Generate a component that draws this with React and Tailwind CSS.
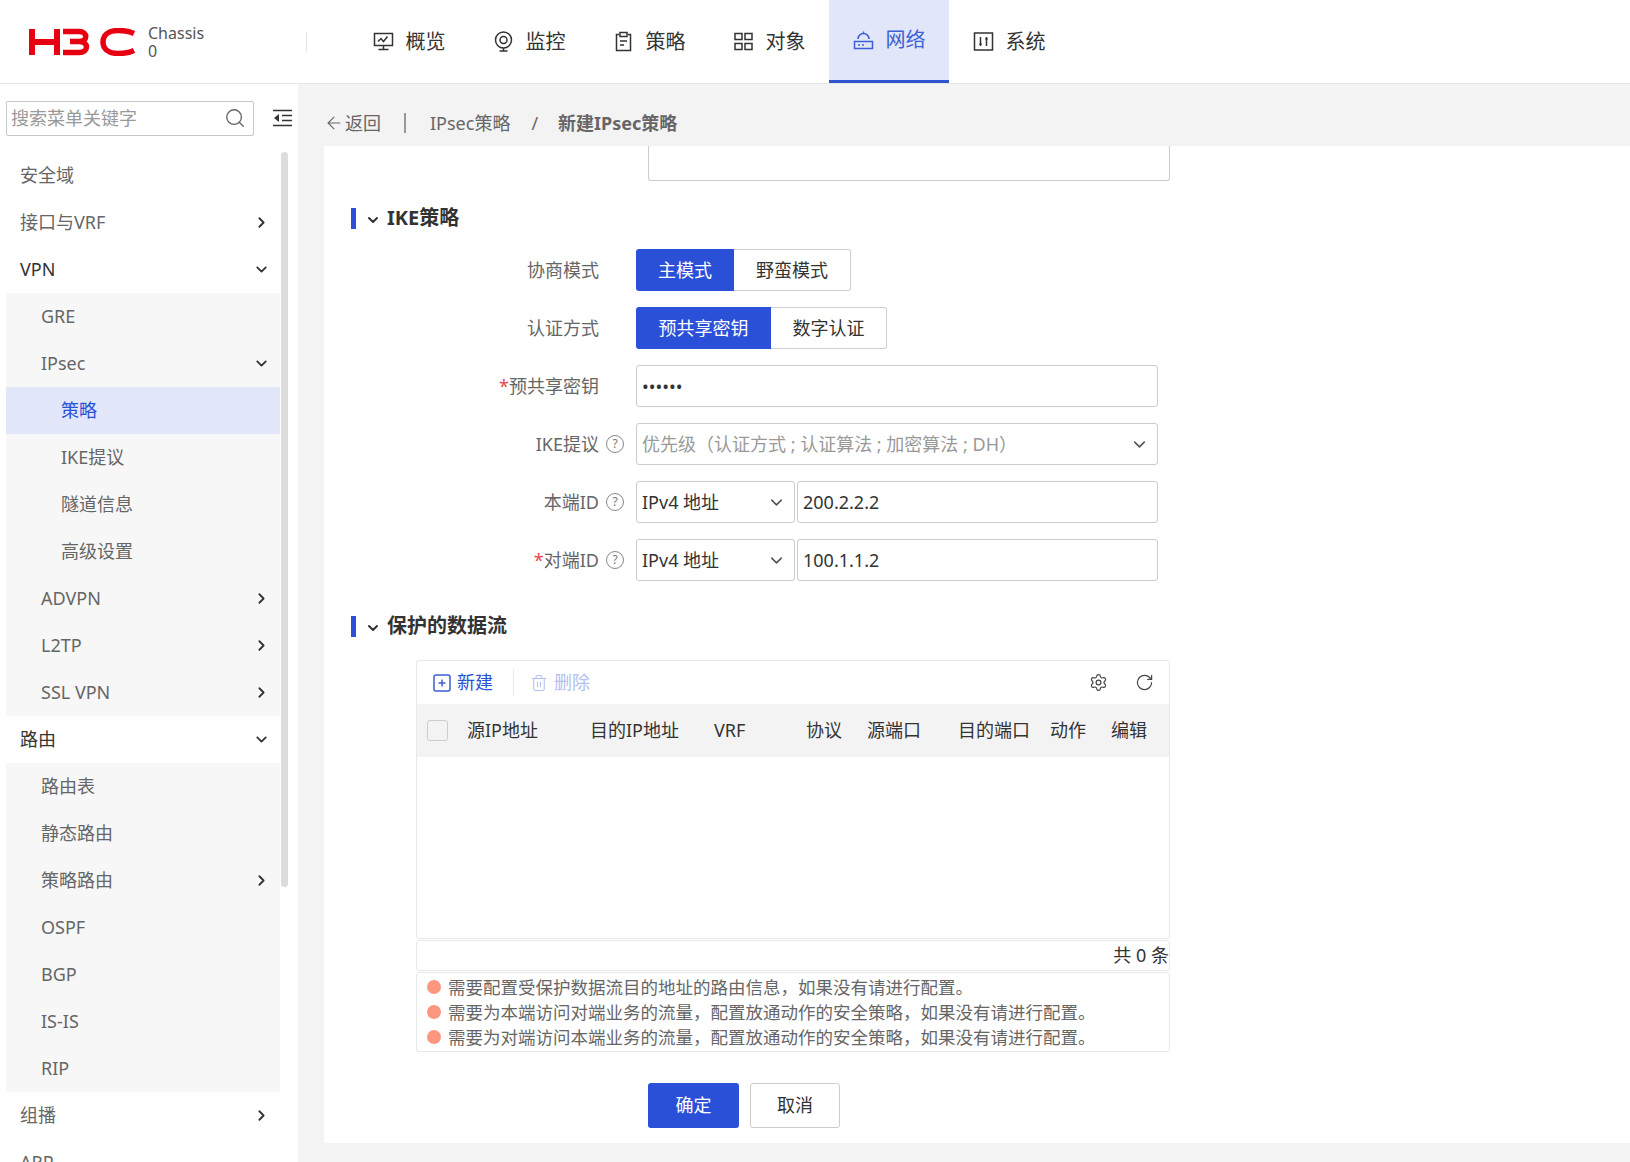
import { ArrowLeft, ChevronDown, ChevronRight, RotateCw, Search, Settings, Trash2 } from "lucide-react";

const FONT = { fontFamily: '"Noto Sans", "Noto Sans CJK SC", sans-serif' };

const menu = [
  { label: "安全域", level: 1 },
  { label: "接口与VRF", level: 1, arrow: "right" },
  { label: "VPN", level: 1, arrow: "down", dark: true },
  { label: "GRE", level: 2 },
  { label: "IPsec", level: 2, arrow: "down" },
  { label: "策略", level: 3, active: true },
  { label: "IKE提议", level: 3 },
  { label: "隧道信息", level: 3 },
  { label: "高级设置", level: 3 },
  { label: "ADVPN", level: 2, arrow: "right" },
  { label: "L2TP", level: 2, arrow: "right" },
  { label: "SSL VPN", level: 2, arrow: "right" },
  { label: "路由", level: 1, arrow: "down", dark: true },
  { label: "路由表", level: 2 },
  { label: "静态路由", level: 2 },
  { label: "策略路由", level: 2, arrow: "right" },
  { label: "OSPF", level: 2 },
  { label: "BGP", level: 2 },
  { label: "IS-IS", level: 2 },
  { label: "RIP", level: 2 },
  { label: "组播", level: 1, arrow: "right" },
  { label: "ARP", level: 1 },
];

const levelPad = { 1: "pl-[14px]", 2: "pl-[35px]", 3: "pl-[55px]" };

function H3CLogo() {
  return (
    <svg width="106" height="28" viewBox="0 0 106 28" fill="none" stroke="#e60012" strokeWidth="5.5">
      <path d="M3 1v26M28 1v26M3 14h25" strokeWidth="6" />
      <path d="M34 3.5h16c9 0 9 10 0 10h-9m9 0c10 0 10 11 0 11H34" />
      <path d="M105 5.5c-4-2-9-3-16-3-10 0-15 5-15 11.500s5 11.500 15 11.500c7 0 12-1 16-3" />
    </svg>
  );
}

function NavIcon({ name }) {
  const cls = name === "net" ? "text-[#3d5fd6]" : "text-[#333]";
  return (
    <svg width="21" height="21" viewBox="0 0 21 21" fill="none" stroke="currentColor" strokeWidth="1.5" className={cls}>
      {name === "overview" && (
        <>
          <path d="M1.500 2.500h18v12h-18z" />
          <path d="M5 10.500l3-3 2.500 3 4-5" />
          <path d="M10.500 14.500v4M5.500 18.500h10" />
        </>
      )}
      {name === "monitor" && (
        <>
          <circle cx="10.500" cy="9" r="8" />
          <circle cx="10.500" cy="9" r="3.500" />
          <path d="M6.500 20h8M10.500 17v3" />
        </>
      )}
      {name === "policy" && (
        <>
          <path d="M6 3.500H3.500v16h14v-16H15" />
          <path d="M7 1.500h7v4H7z" />
          <path d="M7 10h7M7 14h4" />
        </>
      )}
      {name === "object" && (
        <>
          <path d="M2 2.500h7v6H2zM12 2.500h7v6h-7zM2 12.500h7v6H2zM12 12.500h7v6h-7z" />
        </>
      )}
      {name === "net" && (
        <>
          <path d="M5 9a5.500 5.500 0 0 1 11 0" />
          <path d="M1.500 11.500h18v7h-18z" />
          <path d="M5 15h2M9 15h2" />
          <path d="M10.500 3.500V1.500" />
        </>
      )}
      {name === "system" && (
        <>
          <path d="M1.500 2h18v17h-18z" />
          <path d="M7.500 6v9M13.500 6v9" />
          <path d="M5.800 12.500h3.400l-1.700 2.500zM11.800 8.500h3.400l-1.700-2.500z" fill="currentColor" stroke="none" />
        </>
      )}
    </svg>
  );
}

function Help() {
  return (
    <span className="flex h-[18px] w-[18px] shrink-0 items-center justify-center rounded-full border border-[#888] text-[12px] leading-none text-[#777]">
      ?
    </span>
  );
}

function Row({ label, required, help, children }) {
  return (
    <div className="flex h-[42px] items-center">
      <div className="flex w-[312px] shrink-0 items-center justify-end gap-[7px] pr-[12px]">
        <span className="text-[18px] text-[#666]">
          {required && <span className="text-[#e5484d]">*</span>}
          {label}
        </span>
        {help ? <Help /> : <span className="w-[18px]" />}
      </div>
      {children}
    </div>
  );
}

function Toggle({ on, off, onWidth, offWidth }) {
  return (
    <div className="flex h-[42px] text-[18px]">
      <div className={`flex items-center justify-center rounded-l-[3px] bg-[#2b50d8] text-white ${onWidth}`}>{on}</div>
      <div className={`flex items-center justify-center rounded-r-[3px] border border-l-0 border-[#d0d0d0] text-[#333] ${offWidth}`}>{off}</div>
    </div>
  );
}

function SelectBox({ width, muted, children }) {
  return (
    <div className={`flex h-[42px] items-center justify-between rounded-[3px] border border-[#ccc] pl-[5px] pr-[8px] text-[18px] ${width} ${muted ? "text-[#999]" : "text-[#333]"}`}>
      <span>{children}</span>
      <ChevronDown size={19} className="text-[#555]" />
    </div>
  );
}

function TextBox({ className, children }) {
  return (
    <div className={`flex h-[42px] items-center rounded-[3px] border border-[#ccc] pl-[5px] text-[18px] text-[#333] ${className}`}>
      {children}
    </div>
  );
}

function SectionTitle({ children, className }) {
  return (
    <div className={`flex h-[22px] items-center pl-[27px] ${className}`}>
      <span className="h-[21px] w-[5px] bg-[#2b50d8]" />
      <ChevronDown size={16} strokeWidth={3} className="ml-[9px] mt-[3px] text-[#333]" />
      <span className="ml-[6px] text-[20px] font-bold text-[#333]">{children}</span>
    </div>
  );
}

const columns = [
  ["源IP地址", "w-[123px]"],
  ["目的IP地址", "w-[124px]"],
  ["VRF", "w-[92px]"],
  ["协议", "w-[61px]"],
  ["源端口", "w-[91px]"],
  ["目的端口", "w-[92px]"],
  ["动作", "w-[61px]"],
  ["编辑", "w-[50px]"],
];

const notes = [
  "需要配置受保护数据流目的地址的路由信息，如果没有请进行配置。",
  "需要为本端访问对端业务的流量，配置放通动作的安全策略，如果没有请进行配置。",
  "需要为对端访问本端业务的流量，配置放通动作的安全策略，如果没有请进行配置。",
];

function Sidebar() {
  return (
    <aside className="relative h-full w-[298px] shrink-0 overflow-hidden bg-white">
      <div className="flex h-[68px] items-center pl-[6px]">
        <div className="flex h-[35px] w-[248px] items-center justify-between rounded-[2px] border border-[#c8c8c8] pl-[4px] pr-[7px] text-[18px] text-[#999]">
          <span>搜索菜单关键字</span>
          <Search size={22} strokeWidth={1.5} className="text-[#666]" />
        </div>
        <svg width="19" height="18" viewBox="0 0 19 18" fill="none" stroke="#333" strokeWidth="1.6" className="ml-[19px]">
          <path d="M0 1.500h19M0 16.500h19M9 6.500h10M9 11.500h10" />
          <path d="M6 5v8L1 9z" fill="#333" stroke="none" />
        </svg>
      </div>
      <div className="w-[280px] pl-[6px]">
        {menu.map((item) => (
          <div
            key={item.label + item.level}
            className={`flex h-[47px] items-center justify-between pr-[10px] text-[18px] ${levelPad[item.level]} ${
              item.active
                ? "bg-[#e1e6f9] text-[#2b50d8]"
                : item.level === 1
                ? item.dark
                  ? "bg-white text-[#333]"
                  : "bg-white text-[#666]"
                : "bg-[#f7f7f7] text-[#666]"
            }`}
          >
            <span>{item.label}</span>
            {item.arrow === "right" && <ChevronRight size={17} strokeWidth={2.6} className="text-[#333]" />}
            {item.arrow === "down" && <ChevronDown size={17} strokeWidth={2.6} className="text-[#333]" />}
          </div>
        ))}
      </div>
      {/* scrollbar */}
      <div className="absolute left-[281px] top-[68px] h-[735px] w-[7px] rounded-full bg-[#dcdcdc]" />
    </aside>
  );
}

export default function App() {
  return (
    <div className="flex h-[1162px] w-[1630px] flex-col overflow-hidden bg-white" style={FONT}>
      {/* Header */}
      <header className="flex h-[84px] shrink-0 items-center border-b border-[#e4e4e4] bg-white">
        <div className="ml-[29px] flex items-center">
          <H3CLogo />
        </div>
        <div className="ml-[13px] flex flex-col text-[16px] leading-[18px] text-[#555]">
          <span>Chassis</span>
          <span>0</span>
        </div>
        <div className="ml-[102px] h-[20px] w-px bg-[#e5e5e5]" />
        <nav className="ml-[42px] flex h-full">
          {[
            ["overview", "概览"],
            ["monitor", "监控"],
            ["policy", "策略"],
            ["object", "对象"],
            ["net", "网络"],
            ["system", "系统"],
          ].map(([icon, text]) => (
            <div
              key={icon}
              className={`flex h-[83px] w-[120px] items-center justify-center gap-[12px] text-[20px] ${
                icon === "net" ? "border-b-[3px] border-[#2f54d0] bg-[#e1e6f9] text-[#3d5fd6]" : "text-[#333]"
              }`}
            >
              <NavIcon name={icon} />
              <span>{text}</span>
            </div>
          ))}
        </nav>
      </header>

      <div className="flex min-h-0 flex-1">
        <Sidebar />

        <main className="flex min-w-0 flex-1 flex-col bg-[#f3f3f3]">
          {/* Breadcrumb */}
          <div className="flex h-[62px] shrink-0 items-center pl-[26px] pt-[16px] text-[18px] text-[#666]">
            <ArrowLeft size={20} strokeWidth={1.3} className="text-[#666]" />
            <span className="ml-[1px]">返回</span>
            <span className="ml-[23px] h-[20px] w-[2px] bg-[#999]" />
            <span className="ml-[24px]">IPsec策略</span>
            <span className="ml-[21px]">/</span>
            <span className="ml-[20px] font-bold">新建IPsec策略</span>
          </div>

          {/* Form panel */}
          <div className="ml-[26px] h-[997px] shrink-0 bg-white">
            <div className="ml-[324px] h-[35px] w-[522px] rounded-b-[3px] border border-t-0 border-[#ccc]" />

            <SectionTitle className="mt-[26px]">IKE策略</SectionTitle>

            <div className="mt-[20px] flex flex-col gap-[16px]">
              <Row label="协商模式">
                <Toggle on="主模式" off="野蛮模式" onWidth="w-[98px]" offWidth="w-[117px]" />
              </Row>
              <Row label="认证方式">
                <Toggle on="预共享密钥" off="数字认证" onWidth="w-[135px]" offWidth="w-[116px]" />
              </Row>
              <Row label="预共享密钥" required>
                <input
                  type="password"
                  readOnly
                  value="123456"
                  className="h-[42px] w-[522px] rounded-[3px] border border-[#ccc] pl-[5px] text-[18px] text-[#333] outline-none"
                />
              </Row>
              <Row label="IKE提议" help>
                <SelectBox width="w-[522px]" muted>
                  优先级（认证方式 ; 认证算法 ; 加密算法 ; DH）
                </SelectBox>
              </Row>
              <Row label="本端ID" help>
                <SelectBox width="w-[159px]">IPv4 地址</SelectBox>
                <TextBox className="ml-[2px] w-[361px]">200.2.2.2</TextBox>
              </Row>
              <Row label="对端ID" required help>
                <SelectBox width="w-[159px]">IPv4 地址</SelectBox>
                <TextBox className="ml-[2px] w-[361px]">100.1.1.2</TextBox>
              </Row>
            </div>

            <SectionTitle className="mt-[34px]">保护的数据流</SectionTitle>

            {/* Data flow table */}
            <div className="ml-[92px] mt-[23px] w-[754px] text-[18px]">
              <div className="rounded-[3px] border border-[#e8e8e8]">
                <div className="flex h-[43px] items-center pl-[16px] pr-[15px]">
                  <svg width="18" height="18" viewBox="0 0 18 18" fill="none" stroke="#3d5fd6" strokeWidth="1.5">
                    <rect x="1" y="1" width="16" height="16" rx="2" />
                    <path d="M9 5.500v7M5.500 9h7" />
                  </svg>
                  <span className="ml-[6px] text-[#2b50d8]">新建</span>
                  <span className="ml-[20px] h-[27px] w-px bg-[#e8e8e8]" />
                  <Trash2 size={18} strokeWidth={1.4} className="ml-[16px] text-[#b3c0ee]" />
                  <span className="ml-[6px] text-[#b3c0ee]">删除</span>
                  <Settings size={19} strokeWidth={1.5} className="ml-auto text-[#444]" />
                  <RotateCw size={19} strokeWidth={1.5} className="ml-[27px] text-[#444]" />
                </div>
                <div className="flex h-[53px] items-center bg-[#f3f3f3] text-[#333]">
                  <span className="ml-[10px] h-[21px] w-[21px] shrink-0 rounded-[3px] border border-[#ccc]" />
                  <div className="ml-[19px] flex">
                    {columns.map(([name, w]) => (
                      <span key={name} className={`shrink-0 whitespace-nowrap ${w}`}>
                        {name}
                      </span>
                    ))}
                  </div>
                </div>
                <div className="h-[181px]" />
              </div>
              <div className="mt-[1px] flex h-[31px] items-center justify-end rounded-[3px] border border-[#e8e8e8] text-[#333]">
                共 0 条
              </div>
              <div className="mt-[1px] flex h-[80px] flex-col justify-center gap-[1px] rounded-[3px] border border-[#e8e8e8] pl-[10px] text-[#666]">
                {notes.map((note) => (
                  <div key={note} className="flex h-[24px] items-center">
                    <span className="h-[14px] w-[14px] shrink-0 rounded-full bg-[#fd9680]" />
                    <span className="ml-[7px] whitespace-nowrap text-[17.500px]">{note}</span>
                  </div>
                ))}
              </div>
            </div>

            {/* Actions */}
            <div className="ml-[324px] mt-[31px] flex gap-[11px] text-[18px]">
              <button className="h-[45px] w-[91px] rounded-[3px] bg-[#2b50d8] text-white">确定</button>
              <button className="h-[45px] w-[90px] rounded-[3px] border border-[#ccc] bg-white text-[#333]">取消</button>
            </div>
          </div>
        </main>
      </div>
    </div>
  );
}
